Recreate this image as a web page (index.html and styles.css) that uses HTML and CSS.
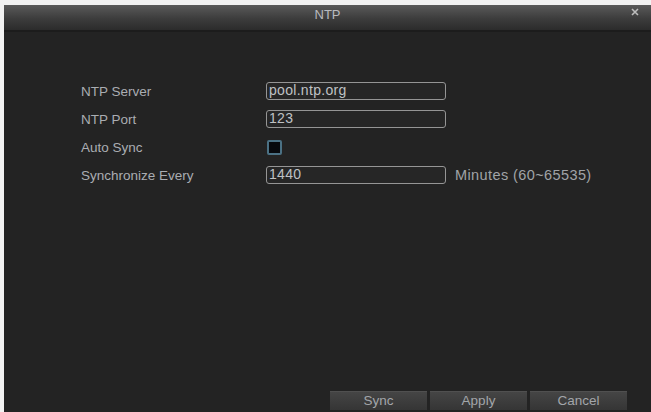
FILE: index.html
```html
<!DOCTYPE html>
<html>
<head>
<meta charset="utf-8">
<link rel="stylesheet" href="styles.css">
</head>
<body>
<div class="frame">
  <div class="dialog">
    <div class="titlebar">
      <span class="title">NTP</span>
      <svg class="close" width="8" height="8" viewBox="0 0 8 8"><path d="M1 1L7 7M7 1L1 7" stroke="#bdbdbd" stroke-width="1.6"/></svg>
    </div>
    <div class="content">
      <div class="form">
        <div class="label">NTP Server</div>
        <div class="field"><div class="input">pool.ntp.org</div></div>
        <div class="label">NTP Port</div>
        <div class="field"><div class="input">123</div></div>
        <div class="label">Auto Sync</div>
        <div class="field"><div class="check"></div></div>
        <div class="label">Synchronize Every</div>
        <div class="field"><div class="input">1440</div><span class="unit">Minutes (60~65535)</span></div>
      </div>
    </div>
    <div class="footer">
      <div class="btn">Sync</div>
      <div class="btn">Apply</div>
      <div class="btn">Cancel</div>
    </div>
  </div>
</div>
</body>
</html>
```
FILE: styles.css
```css
html, body {
  margin: 0;
  padding: 0;
  background: #f2f2f2;
  width: 651px;
  height: 412px;
  overflow: hidden;
}
.frame {
  padding: 5px 0 0 4px;
  height: 407px;
  box-sizing: border-box;
}
.dialog {
  width: 647px;
  height: 407px;
  background: #232323;
  display: flex;
  flex-direction: column;
  font-family: "Liberation Sans", Arial, sans-serif;
  color: #b0b3b7;
}
.titlebar {
  height: 25px;
  flex: none;
  position: relative;
  display: flex;
  align-items: center;
  justify-content: center;
  background: linear-gradient(#5a5a5a, #3c3c3c 55%, #2b2b2b);
  border-bottom: 2px solid #1c1c1c;
}
.title {
  font-size: 13px;
  color: #b8babe;
  margin-top: -6px;
}
.close {
  position: absolute;
  right: 12px;
  top: 3px;
}
.content {
  flex: 1;
  padding: 45px 0 0 77px;
}
.form {
  display: grid;
  grid-template-columns: 185px auto;
  grid-auto-rows: 28px;
  align-items: center;
}
.label {
  font-size: 13.5px;
  color: #aaadb2;
}
.field {
  display: flex;
  align-items: center;
}
.input {
  width: 180px;
  height: 18px;
  box-sizing: border-box;
  border: 1.5px solid #959595;
  border-radius: 3px;
  background: #262626;
  font-size: 14px;
  line-height: 15px;
  padding-left: 2px;
  color: #bfc1c4;
  letter-spacing: 0.3px;
}
.check {
  width: 15px;
  height: 15px;
  box-sizing: border-box;
  border: 2px solid #4b7184;
  border-radius: 2px;
  background: #07090d;
  margin-left: 1px;
}
.unit {
  margin-left: 9px;
  font-size: 14.5px;
  color: #a0a3a7;
  letter-spacing: 0.4px;
}
.footer {
  flex: none;
  display: flex;
  justify-content: flex-end;
  gap: 3px;
  padding: 0 24px 2px 0;
}
.btn {
  width: 97px;
  height: 19px;
  background: linear-gradient(#454545, #353535);
  border-top: 1px solid #505050;
  box-sizing: border-box;
  font-size: 13.5px;
  line-height: 18px;
  text-align: center;
  color: #a3a6aa;
}
```
